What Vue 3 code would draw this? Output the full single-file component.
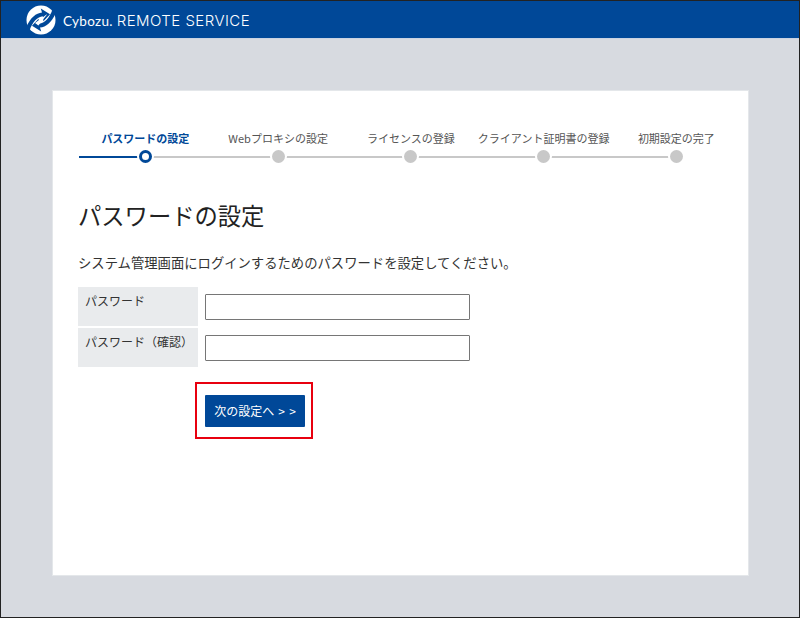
<script setup>
const steps = ['パスワードの設定', 'Webプロキシの設定', 'ライセンスの登録', 'クライアント証明書の登録', '初期設定の完了']
const fields = ['パスワード', 'パスワード（確認）']
</script>

<template>
  <div class="screen">
    <header class="top">
      <svg class="logo" viewBox="0 0 30 30" aria-hidden="true">
        <circle cx="15" cy="15" r="14.5" fill="#fff" />
        <g fill="#004898">
          <path d="M0.5 21.5 C4.5 12.5 10 8 16 7.4 L14.8 3.6 L24 9.3 L17.4 16.2 L16.8 11.2 C11.5 11.6 6.5 17 3.6 25.2 Z" />
          <path d="M29.5 8.5 C25.5 17.5 20 22 14 22.6 L15.2 26.4 L6 20.7 L12.6 13.8 L13.2 18.8 C18.5 18.4 23.5 13 26.4 4.8 Z" />
        </g>
        <path d="M9 18 L20.5 9.6 L21 9.6 L12.4 20.4 Z" fill="#fff" />
      </svg>
      <span class="brand"><span class="brand-a">Cybozu.</span><span class="brand-b">REMOTE SERVICE</span></span>
    </header>
    <main class="page">
      <section class="card">
        <ol class="steps">
          <li v-for="(s, i) in steps" :key="s" class="step" :class="{ on: i === 0, first: i === 0, last: i === 4 }">
            <span class="step-label">{{ s }}</span>
            <span class="track"><span class="dot"></span></span>
          </li>
        </ol>
        <h1 class="title">パスワードの設定</h1>
        <p class="lead">システム管理画面にログインするためのパスワードを設定してください。</p>
        <div class="form">
          <div v-for="f in fields" :key="f" class="row">
            <div class="th">{{ f }}</div>
            <div class="td"><input class="input" type="password" /></div>
          </div>
        </div>
        <div class="action">
          <div class="mark"><button class="btn" type="button">次の設定へ &gt; &gt;</button></div>
        </div>
      </section>
    </main>
  </div>
</template>

<style>
html, body { margin: 0; background: #d7dae0; }
</style>

<style scoped>
.screen {
  width: 800px;
  height: 618px;
  box-sizing: border-box;
  border: 1px solid #222;
  background: #d7dae0;
  font-family: "Noto Sans CJK JP", "Noto Sans", sans-serif;
  color: #333;
  overflow: hidden;
}
.top {
  height: 37px;
  background: #004898;
  border-bottom: 1px solid #c9d3e2;
  display: flex;
  align-items: center;
  padding-left: 25px;
}
.logo { width: 30px; height: 30px; flex: none; }
.brand { margin-left: 7px; color: #fff; display: flex; align-items: baseline; white-space: nowrap; margin-top: 2px; }
.brand-a { font-family: Lato, sans-serif; font-size: 13.5px; letter-spacing: 0.3px; }
.brand-b { font-family: Inter, sans-serif; font-weight: 300; font-size: 15px; margin-left: 4px; letter-spacing: 0.45px; }

.page { padding: 52px 51px 0 52px; }
.card {
  height: 484px;
  box-sizing: border-box;
  background: #fff;
  box-shadow: 0 0 0 1px #e4e7ea;
  padding: 39px 0 0 25px;
}
.steps {
  list-style: none;
  margin: 0;
  padding: 0 0 0 1px;
  display: grid;
  grid-template-columns: repeat(5, 132.75px);
}
.step { display: flex; flex-direction: column; align-items: center; }
.step-label {
  font-size: 11px;
  line-height: 16px;
  color: #555;
  white-space: nowrap;
}
.on .step-label { color: #004898; font-weight: 700; }
.track {
  position: relative;
  align-self: stretch;
  height: 13px;
  margin-top: 4px;
  display: flex;
  justify-content: center;
  align-items: center;
}
.track::before {
  content: "";
  position: absolute;
  left: 0;
  right: 0;
  top: 5.5px;
  height: 2px;
  background: #c8c8c8;
}
.first .track::before {
  background: linear-gradient(to right, #004898 50%, #c8c8c8 50%);
}
.last .track::before { right: 50%; }
.dot {
  position: relative;
  width: 13px;
  height: 13px;
  box-sizing: border-box;
  border-radius: 50%;
  background: #c8c8c8;
  box-shadow: 0 0 0 2px #fff;
}
.on .dot { background: #fff; border: 3px solid #004898; }

.title {
  margin: 35px 0 0;
  font-size: 23.3px;
  line-height: 34px;
  font-weight: 400;
  color: #222;
}
.lead {
  margin: 21px 0 0;
  font-size: 13.33px;
  line-height: 20px;
  color: #333;
}
.form { margin-top: 14px; display: flex; flex-direction: column; gap: 2px; }
.row { display: flex; }
.th {
  width: 120px;
  height: 39px;
  box-sizing: border-box;
  padding: 4px 7px;
  background: #e9ebed;
  font-size: 12px;
  line-height: 20px;
  color: #333;
  white-space: nowrap;
}
.td { padding: 7px 0 0 7px; }
.input {
  display: block;
  width: 265px;
  height: 26px;
  box-sizing: border-box;
  border: 1px solid #767676;
  border-radius: 1px;
  background: #fff;
  margin: 0;
  padding: 0 4px;
}
.action { margin-top: 15px; padding-left: 117px; }
.mark {
  width: 118px;
  height: 57px;
  box-sizing: border-box;
  border: 2px solid #e8000f;
  padding: 11px 0 0 8px;
}
.btn {
  display: block;
  width: 100px;
  height: 32px;
  padding: 0;
  background: #004898;
  border: 0;
  border-radius: 1px;
  color: #fff;
  font-family: inherit;
  font-size: 12px;
  word-spacing: 1.5px;
  line-height: 30px;
  text-align: center;
  white-space: nowrap;
}
</style>
